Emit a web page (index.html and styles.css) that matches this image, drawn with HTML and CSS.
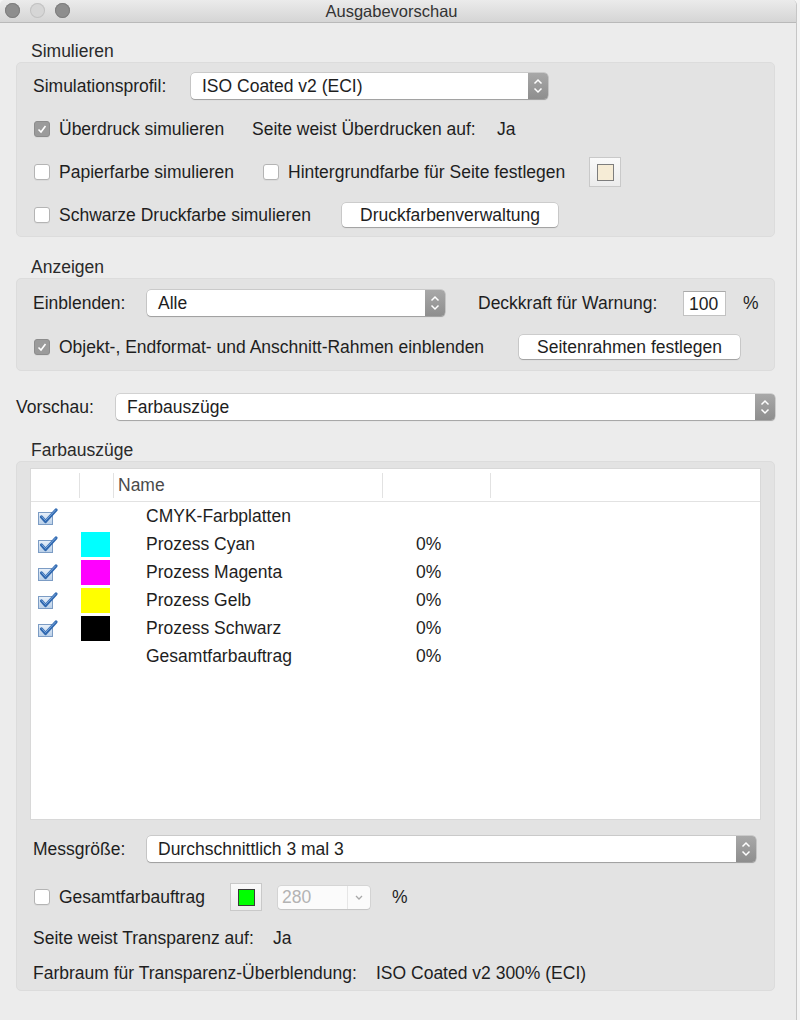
FILE: index.html
```html
<!DOCTYPE html>
<html lang="de">
<head>
  <meta charset="UTF-8">
  <meta name="viewport" content="width=device-width, initial-scale=1.0">
  <title>Ausgabevorschau</title>
  <link rel="stylesheet" href="styles.css">
</head>
<body>
  <div class="window">
    <div class="titlebar">
      <div class="lights">
        <span class="light"></span>
        <span class="light light-off"></span>
        <span class="light"></span>
      </div>
      <div class="title">Ausgabevorschau</div>
    </div>

    <div class="content">
      <!-- Simulieren -->
      <div class="section-label">Simulieren</div>
      <div class="group group-sim">
        <div class="row">
          <span class="cell w-158">Simulationsprofil:</span>
          <div class="select sel-profile">
            <span class="select-text">ISO Coated v2 (ECI)</span>
            <span class="stepper">
              <svg width="20" height="26" viewBox="0 0 20 26"><path d="M6.5 10.5 L10 7 L13.5 10.5 M6.5 15.5 L10 19 L13.5 15.5" fill="none" stroke="#fff" stroke-width="1.5"/></svg>
            </span>
          </div>
        </div>
        <div class="row row-gap">
          <label class="check w-219"><span class="box box-on"><svg width="16" height="16" viewBox="0 0 16 16"><path d="M4.5 8.5 L7 11 L11.5 5" fill="none" stroke="#fff" stroke-width="1.6"/></svg></span>Überdruck simulieren</label>
          <span class="cell w-245">Seite weist Überdrucken auf:</span>
          <span class="cell">Ja</span>
        </div>
        <div class="row row-gap">
          <label class="check w-229"><span class="box"></span>Papierfarbe simulieren</label>
          <label class="check w-327"><span class="box"></span>Hintergrundfarbe für Seite festlegen</label>
          <span class="swatch-btn"><span class="swatch swatch-paper"></span></span>
        </div>
        <div class="row row-gap">
          <label class="check w-309"><span class="box"></span>Schwarze Druckfarbe simulieren</label>
          <button class="btn btn-inks">Druckfarbenverwaltung</button>
        </div>
      </div>

      <!-- Anzeigen -->
      <div class="section-label label-gap">Anzeigen</div>
      <div class="group group-show">
        <div class="row">
          <span class="cell w-114">Einblenden:</span>
          <div class="select sel-show">
            <span class="select-text">Alle</span>
            <span class="stepper">
              <svg width="20" height="26" viewBox="0 0 20 26"><path d="M6.5 10.5 L10 7 L13.5 10.5 M6.5 15.5 L10 19 L13.5 15.5" fill="none" stroke="#fff" stroke-width="1.5"/></svg>
            </span>
          </div>
          <span class="cell w-205 ml-33">Deckkraft für Warnung:</span>
          <span class="num-input">100</span>
          <span class="cell ml-17">%</span>
        </div>
        <div class="row row-gap-16">
          <label class="check w-486"><span class="box box-on"><svg width="16" height="16" viewBox="0 0 16 16"><path d="M4.5 8.5 L7 11 L11.5 5" fill="none" stroke="#fff" stroke-width="1.6"/></svg></span>Objekt-, Endformat- und Anschnitt-Rahmen einblenden</label>
          <button class="btn btn-frame">Seitenrahmen festlegen</button>
        </div>
      </div>

      <!-- Vorschau -->
      <div class="row preview-row">
        <span class="cell w-100">Vorschau:</span>
        <div class="select sel-wide">
          <span class="select-text">Farbauszüge</span>
          <span class="stepper">
            <svg width="20" height="26" viewBox="0 0 20 26"><path d="M6.5 10.5 L10 7 L13.5 10.5 M6.5 15.5 L10 19 L13.5 15.5" fill="none" stroke="#fff" stroke-width="1.5"/></svg>
          </span>
        </div>
      </div>

      <!-- Farbauszüge -->
      <div class="section-label label-gap-19">Farbauszüge</div>
      <div class="group group-sep">
        <div class="sep-table">
          <div class="sep-head">
            <span class="hcell"></span>
            <span class="hcell hline"></span>
            <span class="hcell hline hname">Name</span>
            <span class="hcell hline"></span>
            <span class="hcell hline"></span>
          </div>
          <div id="sep-rows"></div>
        </div>

        <div class="row row-gap-16">
          <span class="cell w-114">Messgröße:</span>
          <div class="select sel-wide">
            <span class="select-text">Durchschnittlich 3 mal 3</span>
            <span class="stepper">
              <svg width="20" height="26" viewBox="0 0 20 26"><path d="M6.5 10.5 L10 7 L13.5 10.5 M6.5 15.5 L10 19 L13.5 15.5" fill="none" stroke="#fff" stroke-width="1.5"/></svg>
            </span>
          </div>
        </div>
        <div class="row row-gap-20">
          <label class="check w-197"><span class="box"></span>Gesamtfarbauftrag</label>
          <span class="swatch-btn swatch-btn-tall"><span class="swatch swatch-green"></span></span>
          <div class="combo">
            <span class="combo-text">280</span>
            <span class="combo-arrow">
              <svg width="22" height="23" viewBox="0 0 22 23"><path d="M8 10 L11 13 L14 10" fill="none" stroke="#a8a8a8" stroke-width="1.3"/></svg>
            </span>
          </div>
          <span class="cell ml-22">%</span>
        </div>
        <div class="row row-gap-13">
          <span class="cell w-240">Seite weist Transparenz auf:</span>
          <span class="cell">Ja</span>
        </div>
        <div class="row row-gap-7">
          <span class="cell w-343">Farbraum für Transparenz-Überblendung:</span>
          <span class="cell">ISO Coated v2 300% (ECI)</span>
        </div>
      </div>
    </div>
  </div>

  <script>
    // Farbauszüge: Platten mit Farbe und Anteil
    const plates = [
      { name: "CMYK-Farbplatten", color: null, value: "", check: true },
      { name: "Prozess Cyan", color: "#00ffff", value: "0%", check: true },
      { name: "Prozess Magenta", color: "#ff00ff", value: "0%", check: true },
      { name: "Prozess Gelb", color: "#ffff00", value: "0%", check: true },
      { name: "Prozess Schwarz", color: "#000000", value: "0%", check: true },
      { name: "Gesamtfarbauftrag", color: null, value: "0%", check: false }
    ];

    const checkIcon =
      '<svg width="22" height="19" viewBox="0 0 22 19">' +
      '<defs><linearGradient id="cb" x1="0" y1="0" x2="0" y2="1">' +
      '<stop offset="0" stop-color="#e9f1fa"/><stop offset="1" stop-color="#b9cfe8"/></linearGradient></defs>' +
      '<rect x="1.5" y="5.5" width="14" height="12" fill="url(#cb)" stroke="#7c9cc4"/>' +
      '<path d="M4.5 10 L8.5 14.5 L19 3" fill="none" stroke="#2f68b0" stroke-width="3.2" stroke-linecap="round" stroke-linejoin="round"/>' +
      '<path d="M5 9.8 L8.5 13.5 L18.5 3" fill="none" stroke="#7fa9dc" stroke-width="1" stroke-linecap="round"/>' +
      '</svg>';

    const rowsEl = document.getElementById("sep-rows");
    plates.forEach(function (p) {
      const row = document.createElement("div");
      row.className = "sep-row";
      row.innerHTML =
        '<span class="scell sicon">' + (p.check ? checkIcon : "") + '</span>' +
        '<span class="scell">' + (p.color ? '<span class="plate" style="background:' + p.color + '"></span>' : "") + '</span>' +
        '<span class="scell sname">' + p.name + '</span>' +
        '<span class="scell sval">' + p.value + '</span>' +
        '<span class="scell"></span>';
      rowsEl.appendChild(row);
    });
  </script>
</body>
</html>
```

FILE: styles.css
```css
body {
  margin: 0;
  background-color: #f4f4f4;
  font-family: "Liberation Sans", Arial, sans-serif;
  font-size: 17.5px;
  color: #1e1e1e;
}

.window {
  width: 796px;
  height: 1020px;
  background-color: #ececec;
  border-right: 1px solid #c6c6c6;
  border-radius: 5px 5px 0 0;
  overflow: hidden;
}

/* Titelleiste */
.titlebar {
  position: relative;
  height: 22px;
  border-bottom: 1px solid #b9b9b9;
  background: linear-gradient(#ebebeb, #d5d5d5);
  display: flex;
  align-items: center;
  justify-content: center;
}

.lights {
  position: absolute;
  left: 5px;
  top: 3px;
  display: flex;
  gap: 10px;
}

.light {
  width: 15px;
  height: 15px;
  border-radius: 50%;
  background-color: #8e8e8e;
  box-shadow: inset 0 0 0 1px #7f7f7f;
}

.light-off {
  background-color: #d6d6d6;
  box-shadow: inset 0 0 0 1px #c2c2c2;
}

.title {
  font-size: 16.5px;
  color: #333;
  margin-left: -13px;
}

/* Inhalt */
.content {
  padding: 18px 21px 0 16px;
}

.section-label {
  height: 21px;
  line-height: 21px;
  padding-left: 15px;
  color: #2a2a2a;
}

.label-gap {
  margin-top: 20px;
}

.label-gap-19 {
  margin-top: 19px;
}

.group {
  background-color: #e3e3e3;
  border: 1px solid #dcdcdc;
  border-radius: 5px;
  padding: 9px 18px 7px 16px;
}

.group-show {
  padding-top: 10px;
  padding-bottom: 9px;
}

.group-sep {
  padding-top: 7px;
  padding-bottom: 3px;
}

.row {
  display: flex;
  align-items: center;
  height: 28px;
  white-space: nowrap;
}

.row-gap { margin-top: 15px; }
.row-gap-16 { margin-top: 16px; }
.row-gap-20 { margin-top: 20px; }
.row-gap-13 { margin-top: 13px; }
.row-gap-7 { margin-top: 7px; }

.preview-row {
  margin-top: 22px;
}

.cell {
  flex: none;
}

.w-100 { width: 100px; }
.w-114 { width: 114px; }
.w-158 { width: 158px; }
.w-197 { width: 197px; }
.w-205 { width: 205px; }
.w-219 { width: 219px; }
.w-229 { width: 229px; }
.w-240 { width: 240px; }
.w-245 { width: 245px; }
.w-309 { width: 309px; }
.w-327 { width: 327px; }
.w-343 { width: 343px; }
.w-486 { width: 486px; }
.ml-17 { margin-left: 17px; }
.ml-22 { margin-left: 22px; }
.ml-33 { margin-left: 33px; }

/* Checkboxen */
.check {
  display: flex;
  align-items: center;
  flex: none;
}

.box {
  width: 16px;
  height: 16px;
  margin: 0 9px 0 1px;
  box-sizing: border-box;
  border: 1px solid #b4b4b4;
  border-radius: 3px;
  background-color: #fff;
  box-shadow: 0 1px 0 rgba(0, 0, 0, 0.04);
}

.box svg {
  display: block;
  margin: -1px;
}

.box-on {
  background-color: #9b9b9b;
  border-color: #8c8c8c;
}

/* Popup-Menüs */
.select {
  display: flex;
  height: 26px;
  background-color: #fff;
  border-radius: 4px;
  box-shadow: 0 0 0 0.5px rgba(0, 0, 0, 0.22), 0 1px 1px rgba(0, 0, 0, 0.22);
  overflow: hidden;
}

.sel-profile { flex: none; width: 357px; }
.sel-show { flex: none; width: 298px; }
.sel-wide { flex: 1; }

.select-text {
  flex: 1;
  line-height: 26px;
  padding-left: 11px;
}

.stepper {
  width: 20px;
  background: linear-gradient(#a8a8a8, #8e8e8e);
}

.stepper svg {
  display: block;
}

/* Knöpfe */
.btn {
  flex: none;
  height: 24px;
  padding: 0;
  font-family: inherit;
  font-size: 17.5px;
  color: #1e1e1e;
  background-color: #fff;
  border: none;
  border-radius: 4px;
  box-shadow: 0 0 0 0.5px rgba(0, 0, 0, 0.2), 0 1px 1px rgba(0, 0, 0, 0.22);
}

.btn-inks { width: 216px; }
.btn-frame { width: 221px; }

.swatch-btn {
  flex: none;
  width: 32px;
  height: 30px;
  box-sizing: border-box;
  border: 1px solid #c9c9c9;
  background: linear-gradient(#fafafa, #ececec);
  display: flex;
  align-items: center;
  justify-content: center;
}

.swatch-btn-tall {
  height: 28px;
}

.swatch {
  width: 17px;
  height: 17px;
  box-sizing: border-box;
  border: 1px solid #7d7d7d;
}

.swatch-paper { background-color: #f6ecd6; }
.swatch-green { background-color: #00ff00; border-color: #3a3a3a; }

.num-input {
  flex: none;
  width: 43px;
  height: 25px;
  box-sizing: border-box;
  border: 1px solid #c2c2c2;
  border-top-color: #a9a9a9;
  background-color: #fff;
  line-height: 24px;
  padding-left: 5px;
}

.combo {
  flex: none;
  display: flex;
  width: 92px;
  height: 23px;
  margin-left: 16px;
  background-color: #fbfbfb;
  border-radius: 3px;
  box-shadow: 0 0 0 0.5px rgba(0, 0, 0, 0.12), 0 1px 1px rgba(0, 0, 0, 0.08);
}

.combo-text {
  flex: 1;
  padding-left: 4px;
  line-height: 23px;
  color: #b3b3b3;
  border-right: 1px solid #e6e6e6;
}

.combo-arrow svg {
  display: block;
}

/* Tabelle Farbauszüge */
.sep-table {
  height: 350px;
  margin: 0 -4px 0 -2px;
  background-color: #fff;
  box-shadow: 0 0 0 1px #d8d8d8;
}

.sep-head,
.sep-row {
  display: grid;
  grid-template-columns: 48px 34px 269px 108px 1fr;
}

.sep-head {
  height: 32px;
  border-bottom: 1px solid #e2e2e2;
  align-items: center;
}

.hcell {
  height: 25px;
  line-height: 25px;
  color: #4a4a4a;
}

.hline {
  border-left: 1px solid #e2e2e2;
}

.hname {
  padding-left: 4px;
}

.sep-row {
  height: 28px;
  align-items: center;
}

.scell {
  display: flex;
  align-items: center;
}

.sicon {
  padding-left: 6px;
}

.plate {
  width: 29px;
  height: 25px;
  margin-left: 2px;
}

.sname {
  padding-left: 33px;
  white-space: nowrap;
}

.sval {
  padding-left: 34px;
}
```
